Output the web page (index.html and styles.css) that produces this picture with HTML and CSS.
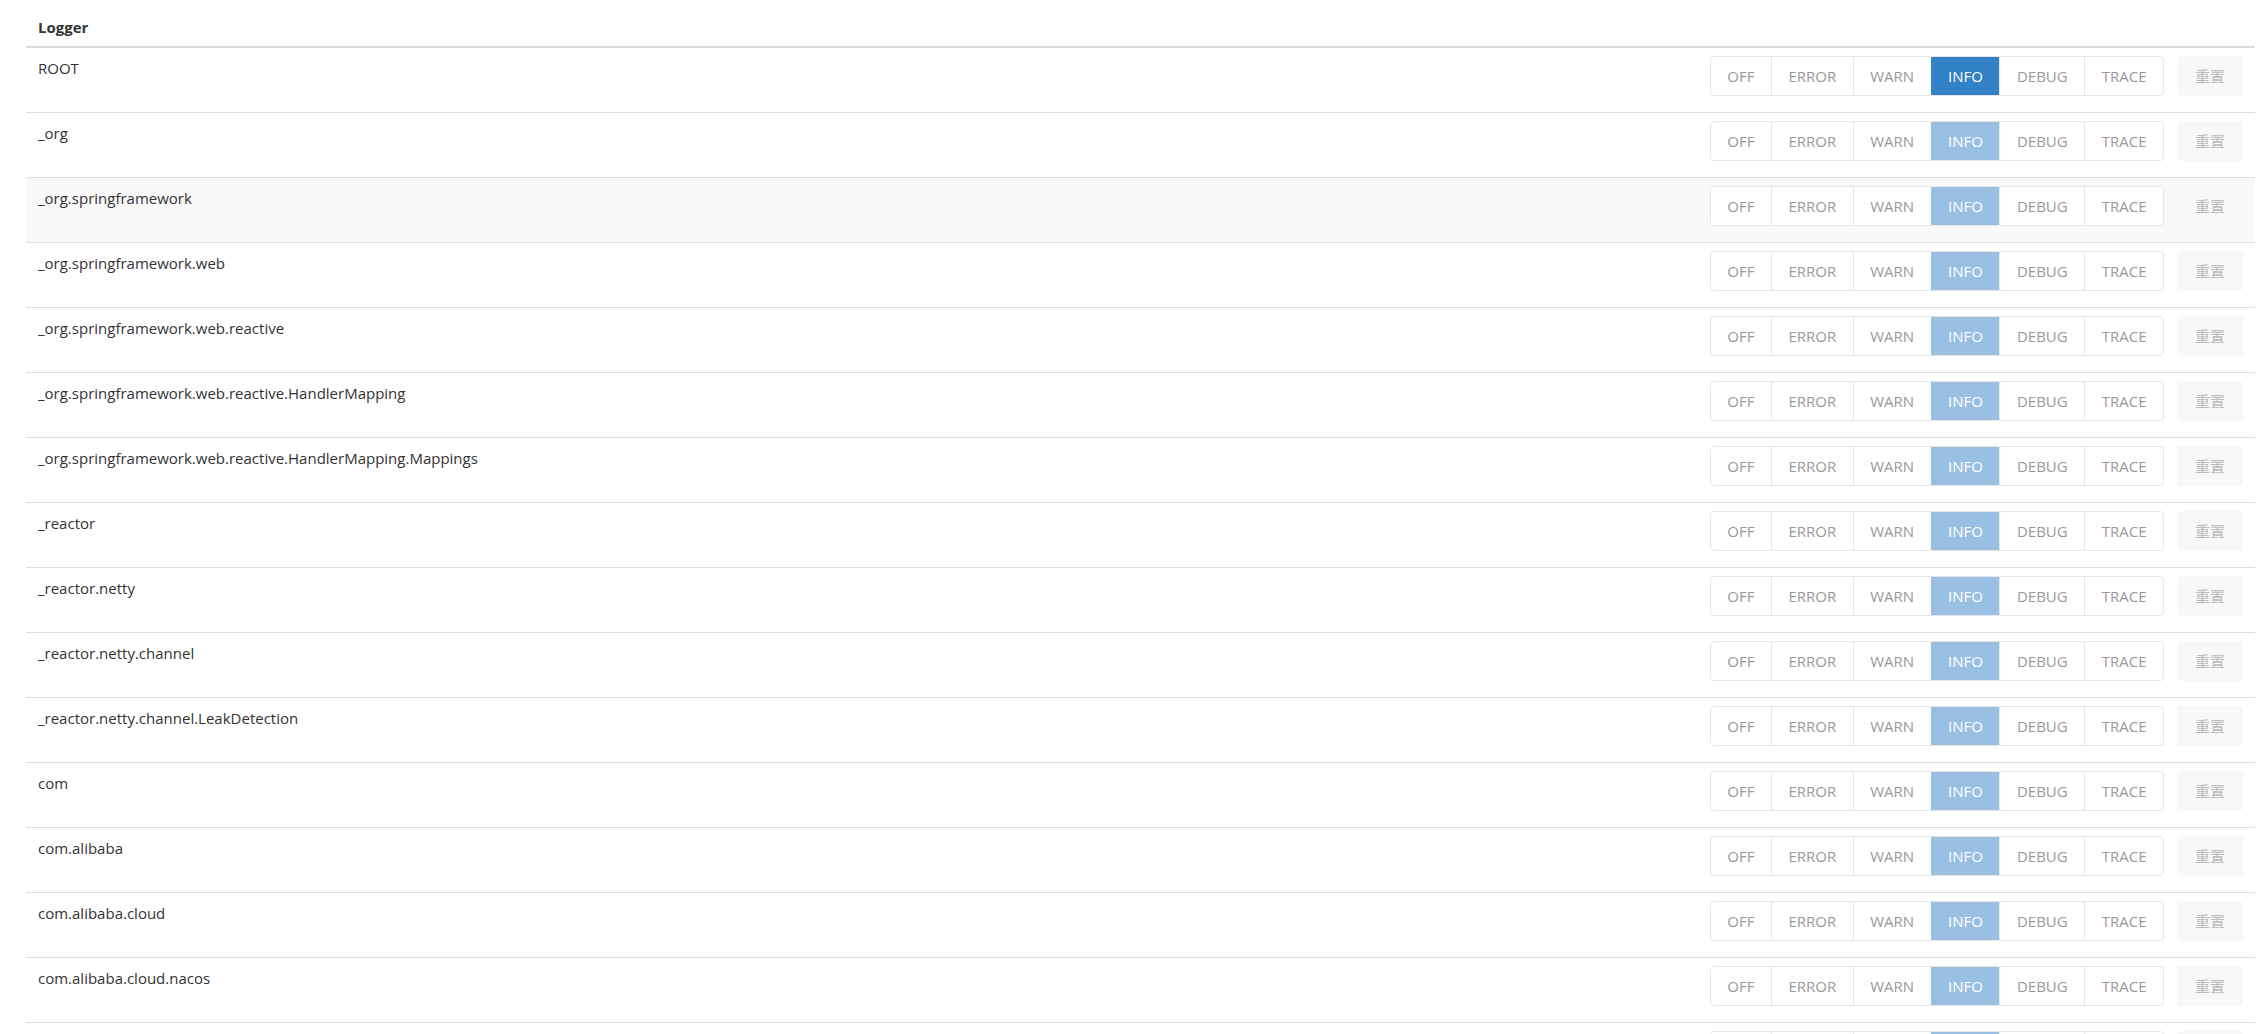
FILE: index.html
```html
<!DOCTYPE html>
<html lang="zh">
<head>
<meta charset="utf-8">
<title>Logger</title>
<link rel="stylesheet" href="styles.css">
</head>
<body>
<div class="page">
  <table class="loggers">
    <thead>
      <tr><th class="col-name">Logger</th><th class="col-actions"></th></tr>
    </thead>
    <tbody>
      <tr>
        <td class="name">ROOT</td>
        <td class="actions"><div class="act"><div class="levels"><span class="lv">OFF</span><span class="lv">ERROR</span><span class="lv">WARN</span><span class="lv on">INFO</span><span class="lv">DEBUG</span><span class="lv">TRACE</span></div><span class="reset">重置</span></div></td>
      </tr>
      <tr>
        <td class="name">_org</td>
        <td class="actions"><div class="act"><div class="levels"><span class="lv">OFF</span><span class="lv">ERROR</span><span class="lv">WARN</span><span class="lv inh">INFO</span><span class="lv">DEBUG</span><span class="lv">TRACE</span></div><span class="reset">重置</span></div></td>
      </tr>
      <tr class="hover">
        <td class="name">_org.springframework</td>
        <td class="actions"><div class="act"><div class="levels"><span class="lv">OFF</span><span class="lv">ERROR</span><span class="lv">WARN</span><span class="lv inh">INFO</span><span class="lv">DEBUG</span><span class="lv">TRACE</span></div><span class="reset">重置</span></div></td>
      </tr>
      <tr>
        <td class="name">_org.springframework.web</td>
        <td class="actions"><div class="act"><div class="levels"><span class="lv">OFF</span><span class="lv">ERROR</span><span class="lv">WARN</span><span class="lv inh">INFO</span><span class="lv">DEBUG</span><span class="lv">TRACE</span></div><span class="reset">重置</span></div></td>
      </tr>
      <tr>
        <td class="name">_org.springframework.web.reactive</td>
        <td class="actions"><div class="act"><div class="levels"><span class="lv">OFF</span><span class="lv">ERROR</span><span class="lv">WARN</span><span class="lv inh">INFO</span><span class="lv">DEBUG</span><span class="lv">TRACE</span></div><span class="reset">重置</span></div></td>
      </tr>
      <tr>
        <td class="name">_org.springframework.web.reactive.HandlerMapping</td>
        <td class="actions"><div class="act"><div class="levels"><span class="lv">OFF</span><span class="lv">ERROR</span><span class="lv">WARN</span><span class="lv inh">INFO</span><span class="lv">DEBUG</span><span class="lv">TRACE</span></div><span class="reset">重置</span></div></td>
      </tr>
      <tr>
        <td class="name">_org.springframework.web.reactive.HandlerMapping.Mappings</td>
        <td class="actions"><div class="act"><div class="levels"><span class="lv">OFF</span><span class="lv">ERROR</span><span class="lv">WARN</span><span class="lv inh">INFO</span><span class="lv">DEBUG</span><span class="lv">TRACE</span></div><span class="reset">重置</span></div></td>
      </tr>
      <tr>
        <td class="name">_reactor</td>
        <td class="actions"><div class="act"><div class="levels"><span class="lv">OFF</span><span class="lv">ERROR</span><span class="lv">WARN</span><span class="lv inh">INFO</span><span class="lv">DEBUG</span><span class="lv">TRACE</span></div><span class="reset">重置</span></div></td>
      </tr>
      <tr>
        <td class="name">_reactor.netty</td>
        <td class="actions"><div class="act"><div class="levels"><span class="lv">OFF</span><span class="lv">ERROR</span><span class="lv">WARN</span><span class="lv inh">INFO</span><span class="lv">DEBUG</span><span class="lv">TRACE</span></div><span class="reset">重置</span></div></td>
      </tr>
      <tr>
        <td class="name">_reactor.netty.channel</td>
        <td class="actions"><div class="act"><div class="levels"><span class="lv">OFF</span><span class="lv">ERROR</span><span class="lv">WARN</span><span class="lv inh">INFO</span><span class="lv">DEBUG</span><span class="lv">TRACE</span></div><span class="reset">重置</span></div></td>
      </tr>
      <tr>
        <td class="name">_reactor.netty.channel.LeakDetection</td>
        <td class="actions"><div class="act"><div class="levels"><span class="lv">OFF</span><span class="lv">ERROR</span><span class="lv">WARN</span><span class="lv inh">INFO</span><span class="lv">DEBUG</span><span class="lv">TRACE</span></div><span class="reset">重置</span></div></td>
      </tr>
      <tr>
        <td class="name">com</td>
        <td class="actions"><div class="act"><div class="levels"><span class="lv">OFF</span><span class="lv">ERROR</span><span class="lv">WARN</span><span class="lv inh">INFO</span><span class="lv">DEBUG</span><span class="lv">TRACE</span></div><span class="reset">重置</span></div></td>
      </tr>
      <tr>
        <td class="name">com.alibaba</td>
        <td class="actions"><div class="act"><div class="levels"><span class="lv">OFF</span><span class="lv">ERROR</span><span class="lv">WARN</span><span class="lv inh">INFO</span><span class="lv">DEBUG</span><span class="lv">TRACE</span></div><span class="reset">重置</span></div></td>
      </tr>
      <tr>
        <td class="name">com.alibaba.cloud</td>
        <td class="actions"><div class="act"><div class="levels"><span class="lv">OFF</span><span class="lv">ERROR</span><span class="lv">WARN</span><span class="lv inh">INFO</span><span class="lv">DEBUG</span><span class="lv">TRACE</span></div><span class="reset">重置</span></div></td>
      </tr>
      <tr>
        <td class="name">com.alibaba.cloud.nacos</td>
        <td class="actions"><div class="act"><div class="levels"><span class="lv">OFF</span><span class="lv">ERROR</span><span class="lv">WARN</span><span class="lv inh">INFO</span><span class="lv">DEBUG</span><span class="lv">TRACE</span></div><span class="reset">重置</span></div></td>
      </tr>
      <tr>
        <td class="name">com.alibaba.cloud.nacos.discovery</td>
        <td class="actions"><div class="act"><div class="levels"><span class="lv">OFF</span><span class="lv">ERROR</span><span class="lv">WARN</span><span class="lv inh">INFO</span><span class="lv">DEBUG</span><span class="lv">TRACE</span></div><span class="reset">重置</span></div></td>
      </tr>
      <tr>
        <td class="name">com.alibaba.cloud.nacos.registry</td>
        <td class="actions"><div class="act"><div class="levels"><span class="lv">OFF</span><span class="lv">ERROR</span><span class="lv">WARN</span><span class="lv inh">INFO</span><span class="lv">DEBUG</span><span class="lv">TRACE</span></div><span class="reset">重置</span></div></td>
      </tr>
    </tbody>
  </table>
</div>
</body>
</html>
```

FILE: styles.css
```css
html, body {
  margin: 0;
  padding: 0;
  background: #fff;
}
body {
  font-family: "Open Sans", "Noto Sans CJK SC", sans-serif;
  font-size: 15px;
  color: #333;
}
.page {
  padding: 0 7px 0 26px;
}
.loggers {
  width: 100%;
  border-collapse: collapse;
}
.loggers th {
  text-align: left;
  font-weight: 700;
  line-height: 20px;
  padding: 17px 12px 9px;
  border-bottom: 2px solid #ddd;
}
.loggers td {
  border-bottom: 1px solid #ddd;
  vertical-align: top;
}
.loggers tr.hover td {
  background: #f9f9f9;
}
.name {
  line-height: 20px;
  padding: 10px 12px;
}
.actions {
  padding: 8px 12px 16px;
  width: 1%;
  white-space: nowrap;
}
.act {
  display: flex;
  align-items: center;
  gap: 13px;
}
.levels {
  display: flex;
  border: 1px solid #e6e6e6;
  border-radius: 4px;
  overflow: hidden;
  background: #fff;
}
.lv {
  height: 38px;
  line-height: 38px;
  padding: 0 16.5px;
  color: #999;
  border-left: 1px solid #e6e6e6;
}
.lv:first-child {
  border-left: none;
}
.lv.on {
  background: #3182c7;
  color: #fff;
  border-left-color: #3182c7;
}
.lv.inh {
  background: #99c0e3;
  color: #fff;
  border-left-color: #99c0e3;
}
.lv.on + .lv, .lv.inh + .lv {
  border-left-color: #e6e6e6;
}
.reset {
  display: block;
  width: 66px;
  height: 40px;
  line-height: 40px;
  text-align: center;
  background: #f8f8f8;
  border-radius: 4px;
  color: #bbb;
}
```
